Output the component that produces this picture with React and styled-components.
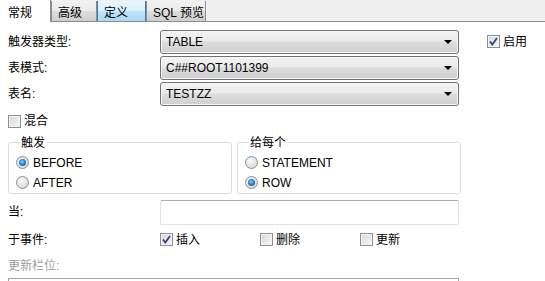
import React from "react";
import styled, { createGlobalStyle, css } from "styled-components";

const GlobalStyle = createGlobalStyle`
  html, body {
    margin: 0;
    padding: 0;
    background: #fff;
  }
  body {
    font-family: "Liberation Sans", "Noto Sans CJK SC", sans-serif;
    font-size: 12px;
    color: #000;
  }
`;

const Page = styled.div`
  width: 545px;
  height: 281px;
  overflow: hidden;
  background: #fff;
`;

const TabBar = styled.div`
  display: flex;
  align-items: flex-end;
  height: 21px;
  background: #f0f0f0;
  border-bottom: 1px solid #898c95;
`;

const tabLooks = {
  active: css`
    height: 22px;
    margin-bottom: -1px;
    background: #fff;
    border-color: #898c95;
    border-bottom: none;
    border-left: none;
    padding-left: 8px;
  `,
  hover: css`
    height: 20px;
    background: linear-gradient(#eaf6fd 0%, #d9f0fc 50%, #bee6fd 51%, #a7d9f5 100%);
    border-color: #3c7fb1;
    border-bottom: none;
  `,
  normal: css`
    height: 20px;
    background: linear-gradient(#f2f2f2 0%, #ebebeb 50%, #dddddd 51%, #cfcfcf 100%);
    border-color: #898c95;
    border-bottom: none;
  `,
};

const Tab = styled.div`
  box-sizing: border-box;
  display: flex;
  align-items: center;
  padding: 0 8px 0 6px;
  border: 1px solid;
  border-top: none;
  white-space: nowrap;
  ${(p) => tabLooks[p.$look || "normal"]}
  width: ${(p) => p.$w}px;
`;

const Form = styled.div`
  padding: 8px 8px 0 8px;
`;

const TopGrid = styled.div`
  display: grid;
  grid-template-columns: 152px 299px auto;
  row-gap: 2px;
  align-items: center;
`;

const Label = styled.div`
  height: 14px;
  line-height: 14px;
  color: ${(p) => (p.$muted ? "#a0a0a0" : "#000")};
`;

const Combo = styled.div`
  box-sizing: border-box;
  height: 24px;
  display: flex;
  align-items: center;
  padding-left: 5px;
  border: 1px solid #707070;
  border-radius: 3px;
  box-shadow: inset 0 0 0 1px #f8f8f8;
  background: linear-gradient(#f2f2f2 0%, #ebebeb 45%, #dddddd 50%, #cfcfcf 100%);
`;

const Arrow = styled.span`
  margin-left: auto;
  margin-right: 6px;
  width: 0;
  height: 0;
  border-left: 4px solid transparent;
  border-right: 4px solid transparent;
  border-top: 4px solid #000;
`;

const EnableCell = styled.div`
  padding-left: 28px;
  align-self: center;
`;

const Check = styled.label`
  display: inline-flex;
  align-items: center;
  gap: 3px;
  height: 14px;
  line-height: 14px;
  width: ${(p) => (p.$w ? `${p.$w}px` : "auto")};
`;

const Box = styled.span`
  box-sizing: border-box;
  width: 13px;
  height: 13px;
  border: 1px solid #8f8f8f;
  box-shadow: inset 0 0 0 1px #f4f4f4;
  background: linear-gradient(135deg, #d6d6d6 0%, #e8e8e8 50%, #f8f8f8 100%);
  display: flex;
  align-items: center;
  justify-content: center;
`;

const MixRow = styled.div`
  margin-top: 8px;
`;

const Groups = styled.div`
  display: grid;
  grid-template-columns: 224px 224px;
  column-gap: 5px;
  margin-top: 5px;
`;

const Group = styled.fieldset`
  margin: 0;
  padding: 3px 7px 0 7px;
  min-width: 0;
  border: 1px solid #d5dfe5;
  border-radius: 3px;

  legend {
    padding: 0 1px;
    margin-left: 4px;
    line-height: 14px;
    height: 14px;
  }
`;

const RadioRow = styled.div`
  display: flex;
  align-items: center;
  gap: 4px;
  height: 20px;
`;

const Dot = styled.span`
  box-sizing: border-box;
  width: 13px;
  height: 13px;
  border-radius: 50%;
  border: 1px solid #8e8f8f;
  background: radial-gradient(circle at 40% 35%, #fbfbfb 0%, #e2e2e2 55%, #cfcfcf 100%);
  display: flex;
  align-items: center;
  justify-content: center;

  &::after {
    content: "";
    display: ${(p) => (p.$on ? "block" : "none")};
    width: 7px;
    height: 7px;
    border-radius: 50%;
    background: radial-gradient(circle at 45% 40%, #7fd0ff 0%, #2a8ad4 45%, #0f3f75 100%);
  }
`;

const FieldRow = styled.div`
  display: grid;
  grid-template-columns: 152px 299px;
  align-items: center;
  margin-top: ${(p) => p.$mt || 0}px;
`;

const TextBox = styled.div`
  box-sizing: border-box;
  height: 25px;
  border: 1px solid #e2e3ea;
  border-top-color: #abadb3;
  border-radius: 2px;
  background: #fff;
`;

const Events = styled.div`
  display: flex;
`;

const ListBox = styled.div`
  box-sizing: border-box;
  margin-top: 5px;
  width: 451px;
  height: 40px;
  border: 1px solid #a0a0a0;
`;

const CheckBox = ({ on, label, w }) => (
  <Check $w={w}>
    <Box>
      {on && (
        <svg width="9" height="9" viewBox="0 0 9 9">
          <path d="M1 4.5 L3.3 7.5 L8 1" fill="none" stroke="#2e418c" strokeWidth="1.8" />
        </svg>
      )}
    </Box>
    {label}
  </Check>
);

const Radio = ({ on, label }) => (
  <RadioRow>
    <Dot $on={on} />
    {label}
  </RadioRow>
);

const App = () => (
  <Page>
    <GlobalStyle />
    <TabBar>
      <Tab $look="active" $w={51}>常规</Tab>
      <Tab $w={46}>高级</Tab>
      <Tab $look="hover" $w={49}>定义</Tab>
      <Tab $w={60}>SQL 预览</Tab>
    </TabBar>

    <Form>
      <TopGrid>
        <Label>触发器类型:</Label>
        <Combo>TABLE<Arrow /></Combo>
        <EnableCell>
          <CheckBox on label="启用" />
        </EnableCell>

        <Label>表模式:</Label>
        <Combo>C##ROOT1101399<Arrow /></Combo>
        <span />

        <Label>表名:</Label>
        <Combo>TESTZZ<Arrow /></Combo>
        <span />
      </TopGrid>

      <MixRow>
        <CheckBox label="混合" />
      </MixRow>

      <Groups>
        <Group>
          <legend>触发</legend>
          <Radio on label="BEFORE" />
          <Radio label="AFTER" />
        </Group>
        <Group>
          <legend>给每个</legend>
          <Radio label="STATEMENT" />
          <Radio on label="ROW" />
        </Group>
      </Groups>

      <FieldRow $mt={6}>
        <Label>当:</Label>
        <TextBox />
      </FieldRow>

      <FieldRow $mt={8}>
        <Label>于事件:</Label>
        <Events>
          <CheckBox on label="插入" w={100} />
          <CheckBox label="删除" w={100} />
          <CheckBox label="更新" />
        </Events>
      </FieldRow>

      <FieldRow $mt={12}>
        <Label $muted>更新栏位:</Label>
      </FieldRow>

      <ListBox />
    </Form>
  </Page>
);

export default App;
